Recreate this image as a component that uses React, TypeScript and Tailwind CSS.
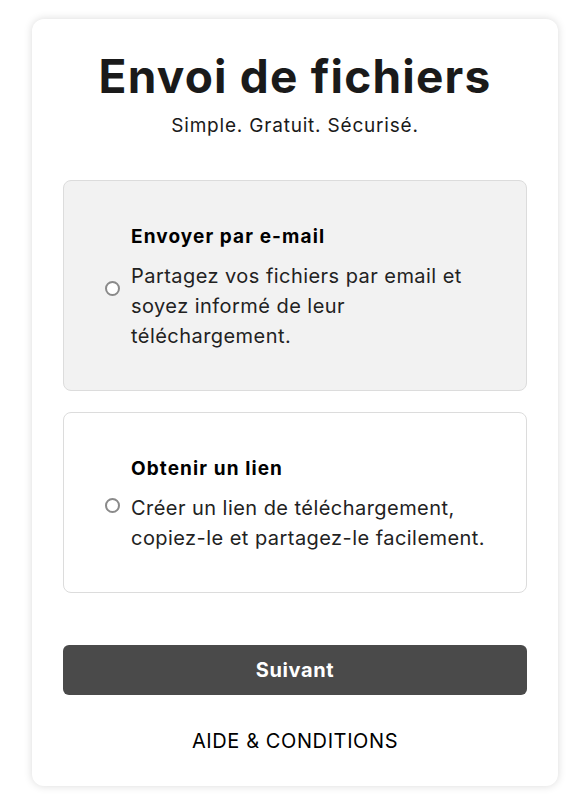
import React from "react";

function Radio() {
  return (
    <span className="block w-[15px] h-[15px] shrink-0 rounded-full border-2 border-[#8a8a8a] bg-white" />
  );
}

function Option({
  title,
  desc,
  active,
  className,
}: {
  title: string;
  desc: string;
  active?: boolean;
  className?: string;
}) {
  return (
    <div
      className={
        "flex items-center gap-[11px] rounded-[8px] border border-[#dcdcdc] pl-[41px] pr-[30px] pt-[5px] " +
        (active ? "bg-[#f2f2f2] " : "bg-white ") +
        (className ?? "")
      }
    >
      <Radio />
      <div className="flex flex-col gap-[12px] max-w-[364px]">
        <div className="text-[19px] leading-[24px] font-bold tracking-[1.1px] text-black">{title}</div>
        <div className="text-[20px] leading-[30px] tracking-[0.45px] text-[#222]">{desc}</div>
      </div>
    </div>
  );
}

export default function App() {
  return (
    <div className="min-h-[800px] w-[575px] bg-white" style={{ fontFamily: "Inter, 'Noto Sans', sans-serif" }}>
      <div className="ml-[32px] mt-[19px] w-[526px] rounded-[12px] bg-white shadow-[0_0_8px_rgba(0,0,0,0.15)] px-[31px] pt-[30px] pb-[32px]">
        <h1 className="text-center text-[46px] leading-[54px] font-bold tracking-[1.2px] text-[#1a1a1a]">Envoi de fichiers</h1>
        <p className="mt-[11px] text-center text-[19px] leading-[24px] tracking-[0.8px] text-[#1a1a1a]">Simple. Gratuit. Sécurisé.</p>
        <div className="mt-[42px] flex flex-col gap-[21px]">
          <Option
            active
            className="h-[211px]"
            title="Envoyer par e-mail"
            desc="Partagez vos fichiers par email et soyez informé de leur téléchargement."
          />
          <Option
            className="h-[181px]"
            title="Obtenir un lien"
            desc="Créer un lien de téléchargement, copiez-le et partagez-le facilement."
          />
        </div>
        <button className="mt-[52px] flex h-[50px] w-full items-center justify-center rounded-[6px] bg-[#4a4a4a] text-[20px] font-bold tracking-[0.6px] text-white">
          Suivant
        </button>
        <div className="mt-[33px] text-center text-[20px] leading-[26px] tracking-[0.6px] text-black">AIDE &amp; CONDITIONS</div>
      </div>
    </div>
  );
}
